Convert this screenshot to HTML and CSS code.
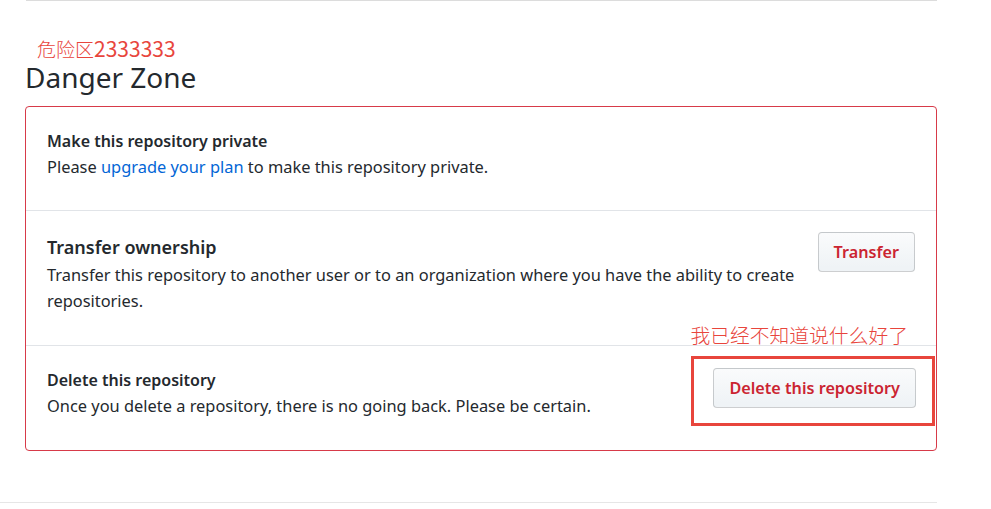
FILE: index.html
```html
<!DOCTYPE html>
<html>
<head>
    <title>Danger Zone</title>
    <link rel="stylesheet" href="styles.css">
</head>
<body>

<div class="page">
    <hr class="top-rule">

    <div class="note note-title">危险区<span class="note-num">2333333</span></div>
    <h2 class="zone-title">Danger Zone</h2>

    <div class="danger-box">
        <div class="danger-row">
            <div class="row-text">
                <strong class="row-title">Make this repository private</strong>
                <p>Please <a href="#">upgrade your plan</a> to make this repository private.</p>
            </div>
        </div>

        <div class="danger-row">
            <div class="row-text">
                <strong class="row-title row-title-big">Transfer ownership</strong>
                <p>Transfer this repository to another user or to an organization where you have the ability to create repositories.</p>
            </div>
            <button class="btn-danger">Transfer</button>
            <div class="note note-row">我已经不知道说什么好了</div>
        </div>

        <div class="danger-row">
            <div class="row-text">
                <strong class="row-title">Delete this repository</strong>
                <p>Once you delete a repository, there is no going back. Please be certain.</p>
            </div>
            <div class="mark-box">
                <button class="btn-danger">Delete this repository</button>
            </div>
        </div>
    </div>
</div>

<hr class="bottom-rule">

</body>
</html>
```

FILE: styles.css
```css
body {
    font-family: "Segoe UI", "Noto Sans", sans-serif;
    font-size: 16px;
    color: #24292e;
    margin: 0;
    padding: 0;
    background-color: #fff;
}

.page {
    width: 912px;
    padding-left: 25px;
}

.top-rule {
    margin: 0 0 0 1px;
    border: none;
    border-top: 1px solid #dcdcdc;
}

.note {
    color: #e8453c;
    font-family: "Noto Sans CJK SC", sans-serif;
    font-weight: 300;
}

.note-title {
    margin: 37px 0 0 12px;
    font-size: 19px;
    line-height: 20px;
}

.note-num {
    font-size: 21px;
    font-weight: 400;
}

.zone-title {
    margin: 0 0 11px 0;
    font-size: 28px;
    font-weight: 400;
    line-height: 36px;
}

.danger-box {
    border: 1px solid #d73a49;
    border-radius: 4px;
}

.danger-row {
    position: relative;
    display: flex;
    align-items: flex-start;
    justify-content: space-between;
    padding: 21px 21px 31px 21px;
    border-top: 1px solid #e1e4e8;
}

.danger-row:first-child {
    border-top: none;
    padding-bottom: 30px;
}

.row-text {
    width: 760px;
}

.row-title {
    display: block;
    font-size: 16px;
    font-weight: 600;
    line-height: 26px;
}

.row-title-big {
    font-size: 18px;
    line-height: 30px;
}

.row-text p {
    margin: 0;
    font-size: 16.4px;
    line-height: 26px;
}

a {
    color: #0366d6;
    text-decoration: none;
}

.btn-danger {
    font-family: inherit;
    font-size: 16.2px;
    font-weight: 600;
    line-height: 22px;
    color: #cb2431;
    padding: 8px 15px;
    background-image: linear-gradient(-180deg, #fafbfc 0%, #eff3f6 90%);
    border: 1px solid rgba(27, 31, 35, 0.2);
    border-radius: 4px;
    cursor: pointer;
}

.note-row {
    position: absolute;
    right: 28px;
    bottom: -1px;
    font-size: 19.8px;
    line-height: 22px;
}

.mark-box {
    position: absolute;
    right: 1px;
    top: 10px;
    width: 244px;
    height: 70px;
    box-sizing: border-box;
    border: 3px solid #e8453c;
    display: flex;
    align-items: flex-start;
    justify-content: flex-end;
    padding: 9px 16px 0 0;
}

.bottom-rule {
    margin: 51px 0 0 0;
    width: 937px;
    border: none;
    border-top: 1px solid #e6e6e6;
}
```
